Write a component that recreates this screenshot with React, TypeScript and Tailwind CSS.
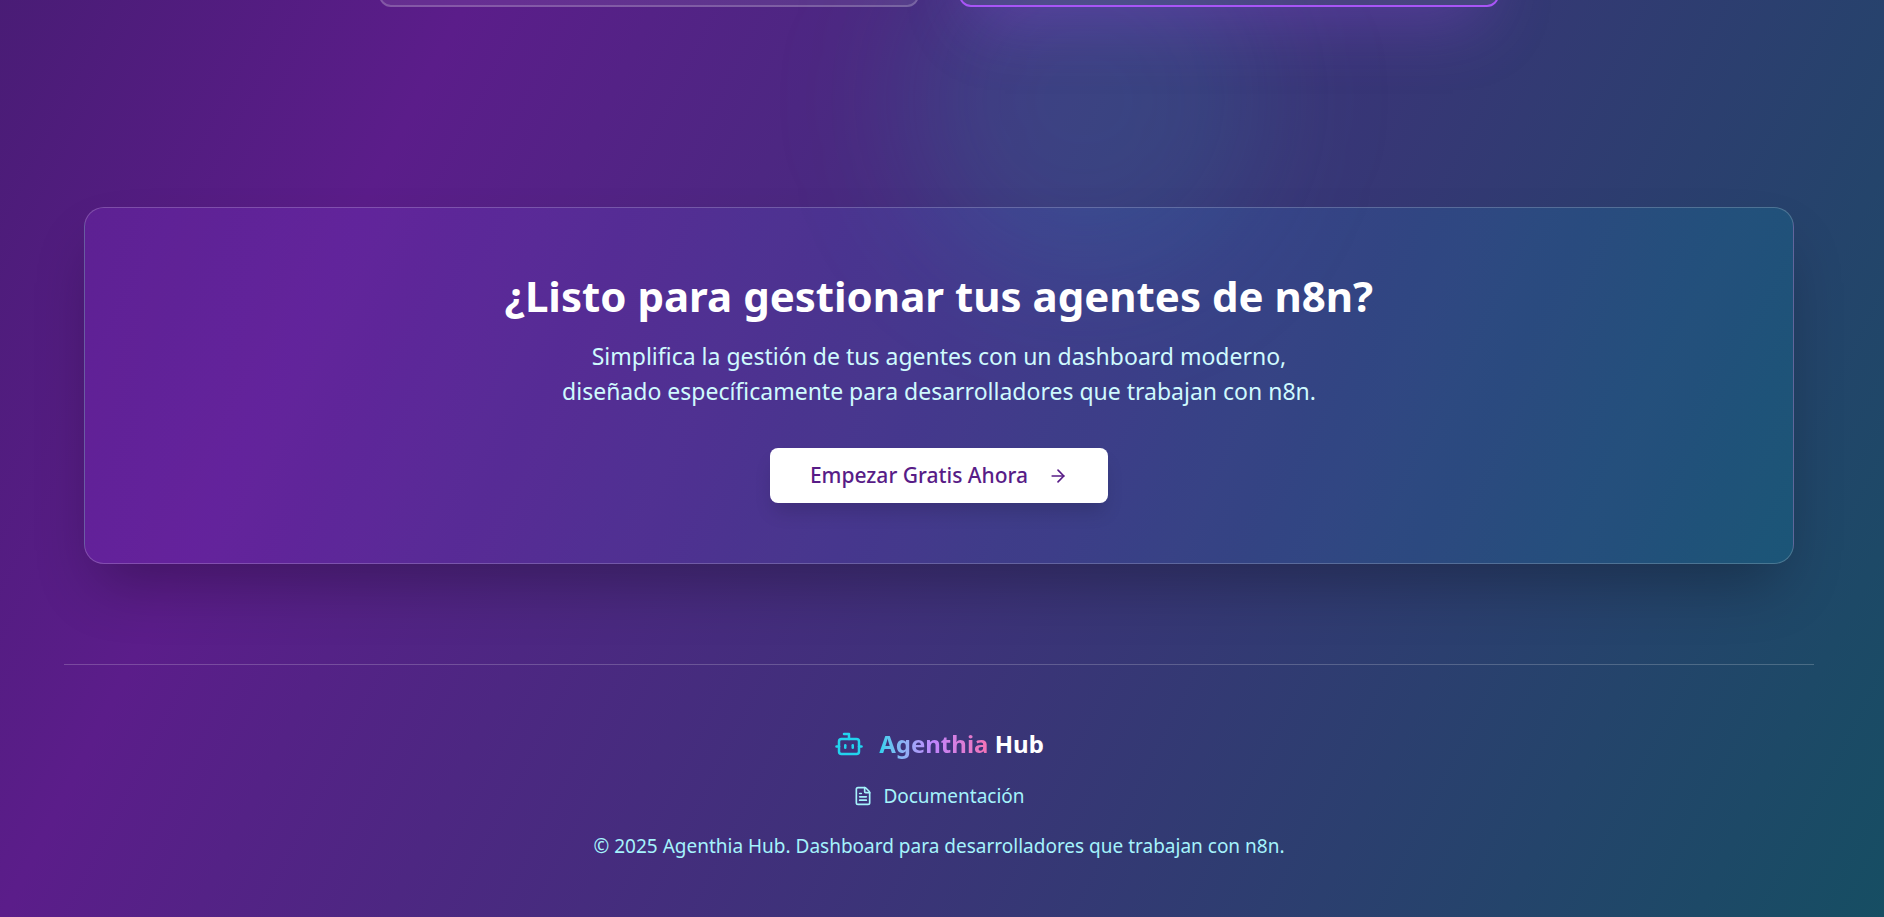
import { ArrowRight, Bot, FileText } from 'lucide-react';

const COPYRIGHT = '© 2025 Agenthia Hub. Dashboard para desarrolladores que trabajan con n8n.';

function PlanCards() {
  return (
    <section className="mx-auto -mt-[313px] grid w-full max-w-[1120px] grid-cols-2 gap-10">
      <div className="h-80 rounded-xl border-2 border-white/20 bg-white/8" />
      <div className="h-80 rounded-xl border-2 border-[#a855f7] bg-white/8 shadow-[0_31px_62px_-15px_rgba(168,85,247,0.25)]" />
    </section>
  );
}

function CallToAction() {
  return (
    <section className="px-5 pt-[200px] pb-[100px]">
      <div className="flex flex-col items-center rounded-[20px] border border-white/20 bg-[linear-gradient(to_right,rgba(147,51,234,0.2),rgba(8,145,178,0.2))] px-5 py-[60px] text-center shadow-[0_31px_62px_-15px_rgba(0,0,0,0.3)]">
        <h2 className="text-[42px] leading-[56px] font-bold text-white">¿Listo para gestionar tus agentes de n8n?</h2>
        <p className="mt-[15px] text-[23px] leading-[35px] text-[#cffafe]">
          Simplifica la gestión de tus agentes con un dashboard moderno,
          <br />
          diseñado específicamente para desarrolladores que trabajan con n8n.
        </p>
        <button
          type="button"
          className="mt-[39px] flex h-[55px] items-center gap-5 rounded-lg bg-white px-10 text-[21px] font-medium text-[#581c87] shadow-[0_12px_19px_-4px_rgba(0,0,0,0.15)]"
        >
          Empezar Gratis Ahora
          <ArrowRight className="size-5" />
        </button>
      </div>
    </section>
  );
}

function Footer() {
  return (
    <footer className="flex flex-col items-center gap-5 border-t border-white/20 pt-[61px] pb-[60px] text-center text-[#a5f3fc]">
      <div className="flex items-center gap-[15px]">
        <Bot className="size-[30px] text-[#22d3ee]" />
        <span className="text-[24px] leading-[35px] font-bold text-white">
          <span className="bg-gradient-to-r from-[#22d3ee] via-[#c084fc] to-[#f472b6] bg-clip-text text-transparent">
            Agenthia
          </span>{' '}
          Hub
        </span>
      </div>
      <a href="#documentacion" className="flex items-center gap-2.5 text-[19px] leading-[30px]">
        <FileText className="size-5" />
        Documentación
      </a>
      <p className="text-[19px] leading-[30px]">{COPYRIGHT}</p>
    </footer>
  );
}

export default function App() {
  return (
    <div className="relative min-h-screen overflow-hidden bg-[linear-gradient(to_bottom_right,#141a38,#5b1d8a,#164e63)] bg-[length:100%_3720px] bg-bottom pr-1.5 font-['Noto_Sans',sans-serif]">
      <div className="absolute -top-20 left-[48%] size-[360px] rounded-full bg-[#14b8a6]/15 blur-3xl" />
      <div className="relative mx-auto flex w-full max-w-[1750px] flex-col">
        <PlanCards />
        <CallToAction />
        <Footer />
      </div>
    </div>
  );
}
